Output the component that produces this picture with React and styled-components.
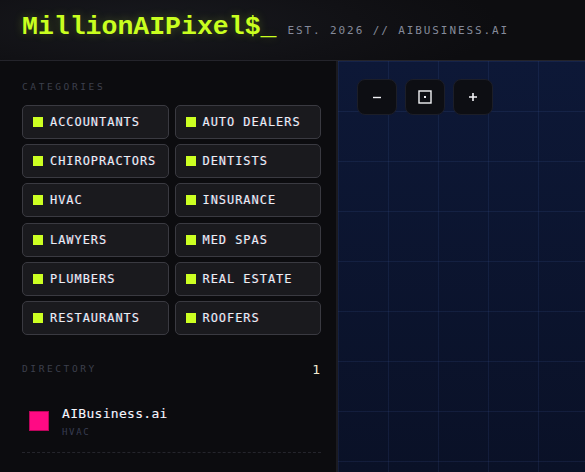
import React from "react";
import styled, { createGlobalStyle } from "styled-components";

const categories = [
  "ACCOUNTANTS",
  "AUTO DEALERS",
  "CHIROPRACTORS",
  "DENTISTS",
  "HVAC",
  "INSURANCE",
  "LAWYERS",
  "MED SPAS",
  "PLUMBERS",
  "REAL ESTATE",
  "RESTAURANTS",
  "ROOFERS",
];

const listings = [{ id: 1, name: "AIBusiness.ai", category: "HVAC", color: "#ff0a84" }];

const GlobalStyle = createGlobalStyle`
  html, body {
    margin: 0;
    padding: 0;
    background: #0b0b0e;
    font-family: "DejaVu Sans Mono", "Liberation Mono", monospace;
  }
  * { box-sizing: border-box; }
`;

const App = () => {
  return (
    <>
      <GlobalStyle />
      <Page>
        <Header>
          <Logo>MillionAIPixel$_</Logo>
          <Tagline>EST. 2026 // AIBUSINESS.AI</Tagline>
        </Header>
        <Main>
          <Sidebar>
            <SectionLabel>CATEGORIES</SectionLabel>
            <CategoryGrid>
              {categories.map((c) => (
                <CategoryButton key={c}>
                  <Dot />
                  {c}
                </CategoryButton>
              ))}
            </CategoryGrid>
            <DirectoryHead>
              <SectionLabel>DIRECTORY</SectionLabel>
              <Count>{listings.length}</Count>
            </DirectoryHead>
            {listings.map((l) => (
              <Listing key={l.id}>
                <Swatch color={l.color} />
                <div>
                  <ListingName>{l.name}</ListingName>
                  <ListingCategory>{l.category}</ListingCategory>
                </div>
              </Listing>
            ))}
          </Sidebar>
          <Canvas>
            <ZoomBar>
              <ZoomButton aria-label="zoom out">
                <svg width="10" height="10" viewBox="0 0 10 10">
                  <path d="M1 5.5h8" stroke="#f2f2f6" strokeWidth="1.4" />
                </svg>
              </ZoomButton>
              <ZoomButton aria-label="fit">
                <svg width="14" height="14" viewBox="0 0 14 14">
                  <rect x="1" y="1" width="12" height="12" fill="none" stroke="#f2f2f6" strokeWidth="1.4" />
                  <rect x="6" y="6" width="2" height="2" fill="#f2f2f6" />
                </svg>
              </ZoomButton>
              <ZoomButton aria-label="zoom in">
                <svg width="10" height="10" viewBox="0 0 10 10">
                  <path d="M1 5h8M5 1v8" stroke="#f2f2f6" strokeWidth="1.6" />
                </svg>
              </ZoomButton>
            </ZoomBar>
          </Canvas>
        </Main>
      </Page>
    </>
  );
};

export default App;

const Page = styled.div`
  height: 100vh;
  display: flex;
  flex-direction: column;
  overflow: hidden;
`;

const Header = styled.header`
  height: 61px;
  flex-shrink: 0;
  display: flex;
  align-items: baseline;
  gap: 11px;
  padding: 10px 22px 0;
  background: radial-gradient(ellipse 60% 120% at 25% 40%, #18191e 0%, #111115 60%, #0d0d10 100%);
  border-bottom: 1px solid #24242b;
`;

const Logo = styled.h1`
  margin: 0;
  font-family: "Liberation Mono", "Courier New", monospace;
  font-weight: 700;
  font-size: 26.5px;
  line-height: 34px;
  color: #c9ff1f;
  text-shadow: 0 0 10px rgba(201, 255, 31, 0.25);
`;

const Tagline = styled.span`
  font-size: 11px;
  letter-spacing: 1.9px;
  color: #858a9a;
`;

const Main = styled.div`
  flex: 1;
  display: flex;
  min-height: 0;
`;

const Sidebar = styled.aside`
  width: 338px;
  flex-shrink: 0;
  padding: 20px 15px 0 22px;
  background: #0c0c0f;
  border-right: 2px solid #1b1b21;
`;

const SectionLabel = styled.div`
  font-size: 9.5px;
  letter-spacing: 2.6px;
  color: #3d404d;
  line-height: 12px;
`;

const CategoryGrid = styled.div`
  display: grid;
  grid-template-columns: 1fr 1fr;
  gap: 5.2px 6px;
  margin-top: 12px;
`;

const CategoryButton = styled.button`
  height: 34px;
  display: flex;
  align-items: center;
  gap: 7px;
  padding: 0 10px;
  background: #1a1a1e;
  border: 1px solid #3a3a41;
  border-radius: 5px;
  font-family: "DejaVu Sans Mono", monospace;
  font-size: 12px;
  letter-spacing: 0.95px;
  color: #eceef4;
  text-shadow: -0.6px 0 rgba(0, 190, 255, 0.35), 0.6px 0 rgba(255, 40, 90, 0.35);
  cursor: pointer;
  text-align: left;
`;

const Dot = styled.span`
  width: 10px;
  height: 10px;
  flex-shrink: 0;
  background: #ccff22;
`;

const DirectoryHead = styled.div`
  display: flex;
  justify-content: space-between;
  align-items: center;
  margin-top: 27px;
`;

const Count = styled.span`
  font-size: 13px;
  color: #f3ead2;
  padding-right: 1px;
`;

const Listing = styled.div`
  display: flex;
  align-items: center;
  gap: 13px;
  margin-top: 29px;
  padding: 0 0 15px 7px;
  border-bottom: 1px dashed #25252c;
`;

const Swatch = styled.span`
  width: 20px;
  height: 20px;
  flex-shrink: 0;
  background: ${(p) => p.color};
  box-shadow: inset 0 0 0 1px rgba(120, 0, 50, 0.5);
`;

const ListingName = styled.div`
  font-size: 13px;
  letter-spacing: 0.3px;
  color: #f4f5fa;
  line-height: 16px;
  text-shadow: -0.5px 0 rgba(0, 190, 255, 0.3), 0.5px 0 rgba(255, 40, 90, 0.3);
`;

const ListingCategory = styled.div`
  font-size: 9px;
  letter-spacing: 1.7px;
  color: #383d52;
  margin-top: 5px;
`;

const Canvas = styled.section`
  position: relative;
  flex: 1;
  background-color: #0b1430;
  background-image:
    linear-gradient(to right, rgba(70, 100, 170, 0.15) 1px, transparent 1px),
    linear-gradient(to bottom, rgba(70, 100, 170, 0.15) 1px, transparent 1px),
    linear-gradient(180deg, #0d1837 0%, #0a1127 100%);
  background-size: 50px 50px, 50px 50px, 100% 100%;
`;

const ZoomBar = styled.div`
  position: absolute;
  top: 18px;
  left: 19px;
  display: flex;
  gap: 8px;
`;

const ZoomButton = styled.button`
  width: 40px;
  height: 36px;
  display: flex;
  align-items: center;
  justify-content: center;
  padding: 0;
  background: #0d0e13;
  border: 1px solid #1c1e28;
  border-radius: 8px;
  cursor: pointer;
`;
